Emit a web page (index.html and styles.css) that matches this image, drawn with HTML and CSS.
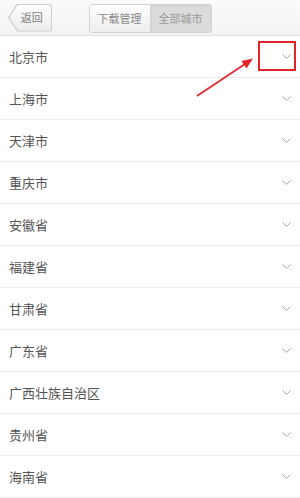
FILE: index.html
```html
<!DOCTYPE html>
<html lang="zh">
<head>
<meta charset="utf-8">
<link rel="stylesheet" href="styles.css">
</head>
<body>
<div class="page">
  <header class="topbar">
    <div class="back-wrap">
      <div class="back-outer"><div class="back-inner">返回</div></div>
    </div>
    <div class="segments">
      <div class="seg seg-left">下载管理</div>
      <div class="seg seg-right">全部城市</div>
    </div>
    <div></div>
  </header>
  <ul class="list">
    <li class="row"><span>北京市</span><svg class="chev" width="9" height="5" viewBox="0 0 9 5"><polyline points="0.5,0.5 4.5,4.5 8.5,0.5"/></svg></li>
    <li class="row"><span>上海市</span><svg class="chev" width="9" height="5" viewBox="0 0 9 5"><polyline points="0.5,0.5 4.5,4.5 8.5,0.5"/></svg></li>
    <li class="row"><span>天津市</span><svg class="chev" width="9" height="5" viewBox="0 0 9 5"><polyline points="0.5,0.5 4.5,4.5 8.5,0.5"/></svg></li>
    <li class="row"><span>重庆市</span><svg class="chev" width="9" height="5" viewBox="0 0 9 5"><polyline points="0.5,0.5 4.5,4.5 8.5,0.5"/></svg></li>
    <li class="row"><span>安徽省</span><svg class="chev" width="9" height="5" viewBox="0 0 9 5"><polyline points="0.5,0.5 4.5,4.5 8.5,0.5"/></svg></li>
    <li class="row"><span>福建省</span><svg class="chev" width="9" height="5" viewBox="0 0 9 5"><polyline points="0.5,0.5 4.5,4.5 8.5,0.5"/></svg></li>
    <li class="row"><span>甘肃省</span><svg class="chev" width="9" height="5" viewBox="0 0 9 5"><polyline points="0.5,0.5 4.5,4.5 8.5,0.5"/></svg></li>
    <li class="row"><span>广东省</span><svg class="chev" width="9" height="5" viewBox="0 0 9 5"><polyline points="0.5,0.5 4.5,4.5 8.5,0.5"/></svg></li>
    <li class="row"><span>广西壮族自治区</span><svg class="chev" width="9" height="5" viewBox="0 0 9 5"><polyline points="0.5,0.5 4.5,4.5 8.5,0.5"/></svg></li>
    <li class="row"><span>贵州省</span><svg class="chev" width="9" height="5" viewBox="0 0 9 5"><polyline points="0.5,0.5 4.5,4.5 8.5,0.5"/></svg></li>
    <li class="row"><span>海南省</span><svg class="chev" width="9" height="5" viewBox="0 0 9 5"><polyline points="0.5,0.5 4.5,4.5 8.5,0.5"/></svg></li>
  </ul>
  <svg class="annot" width="300" height="498" viewBox="0 0 300 498">
    <rect x="259" y="42" width="36" height="28" fill="none" stroke="#e3232a" stroke-width="2"/>
    <line x1="197" y1="96" x2="245" y2="64" stroke="#e3232a" stroke-width="1.6"/>
    <polygon points="253,58.5 241.5,61 246.5,68.5" fill="#e3232a"/>
  </svg>
</div>
</body>
</html>
```
FILE: styles.css
```css
html, body {
  margin: 0;
  padding: 0;
  background: #ffffff;
}
body {
  font-family: "Noto Sans CJK SC", "Noto Sans", sans-serif;
  overflow: hidden;
}
.page {
  position: relative;
  width: 300px;
  height: 498px;
  overflow: hidden;
}
.topbar {
  height: 35px;
  border-bottom: 1px solid #e2e2e2;
  background: linear-gradient(#fbfbfb, #f3f3f3);
  display: grid;
  grid-template-columns: 1fr auto 1fr;
  align-items: center;
}
.back-wrap {
  padding-left: 8px;
  display: flex;
  align-items: center;
}
.back-outer {
  width: 44px;
  height: 28px;
  padding: 1px 1px 1px 1.5px;
  box-sizing: border-box;
  background: #cfcfcf;
  clip-path: polygon(9px 0, 100% 0, 100% 100%, 9px 100%, 0 50%);
  border-radius: 0 3px 3px 0;
}
.back-inner {
  height: 100%;
  background: linear-gradient(#fdfdfd, #ececec);
  clip-path: polygon(8.5px 0, 100% 0, 100% 100%, 8.5px 100%, 0 50%);
  border-radius: 0 2px 2px 0;
  display: flex;
  align-items: center;
  justify-content: center;
  padding-left: 3px;
  box-sizing: border-box;
  font-size: 11px;
  color: #7a7a7a;
  line-height: 1;
}
.segments {
  display: flex;
  height: 29px;
  border: 1px solid #d2d2d2;
  border-radius: 3px;
  box-sizing: border-box;
  overflow: hidden;
  margin-top: 1px;
}
.seg {
  width: 60px;
  display: flex;
  align-items: center;
  justify-content: center;
  font-size: 11px;
  line-height: 1;
  color: #8a8a8a;
}
.seg-left {
  background: linear-gradient(#fdfdfd, #eeeeee);
  border-right: 1px solid #d2d2d2;
}
.seg-right {
  background: #dcdcdc;
  box-shadow: inset 0 1px 2px rgba(0,0,0,0.08);
  color: #9a9a9a;
}
.list {
  list-style: none;
  margin: 0;
  padding: 0;
}
.row {
  height: 41px;
  border-bottom: 1px solid #ececec;
  display: flex;
  align-items: center;
  justify-content: space-between;
  padding: 0 9px 0 9px;
  font-size: 13px;
  color: #555555;
}
.chev {
  display: block;
}
.chev polyline {
  fill: none;
  stroke: #a8a8a8;
  stroke-width: 1;
}
.annot {
  position: absolute;
  left: 0;
  top: 0;
  pointer-events: none;
}
```
